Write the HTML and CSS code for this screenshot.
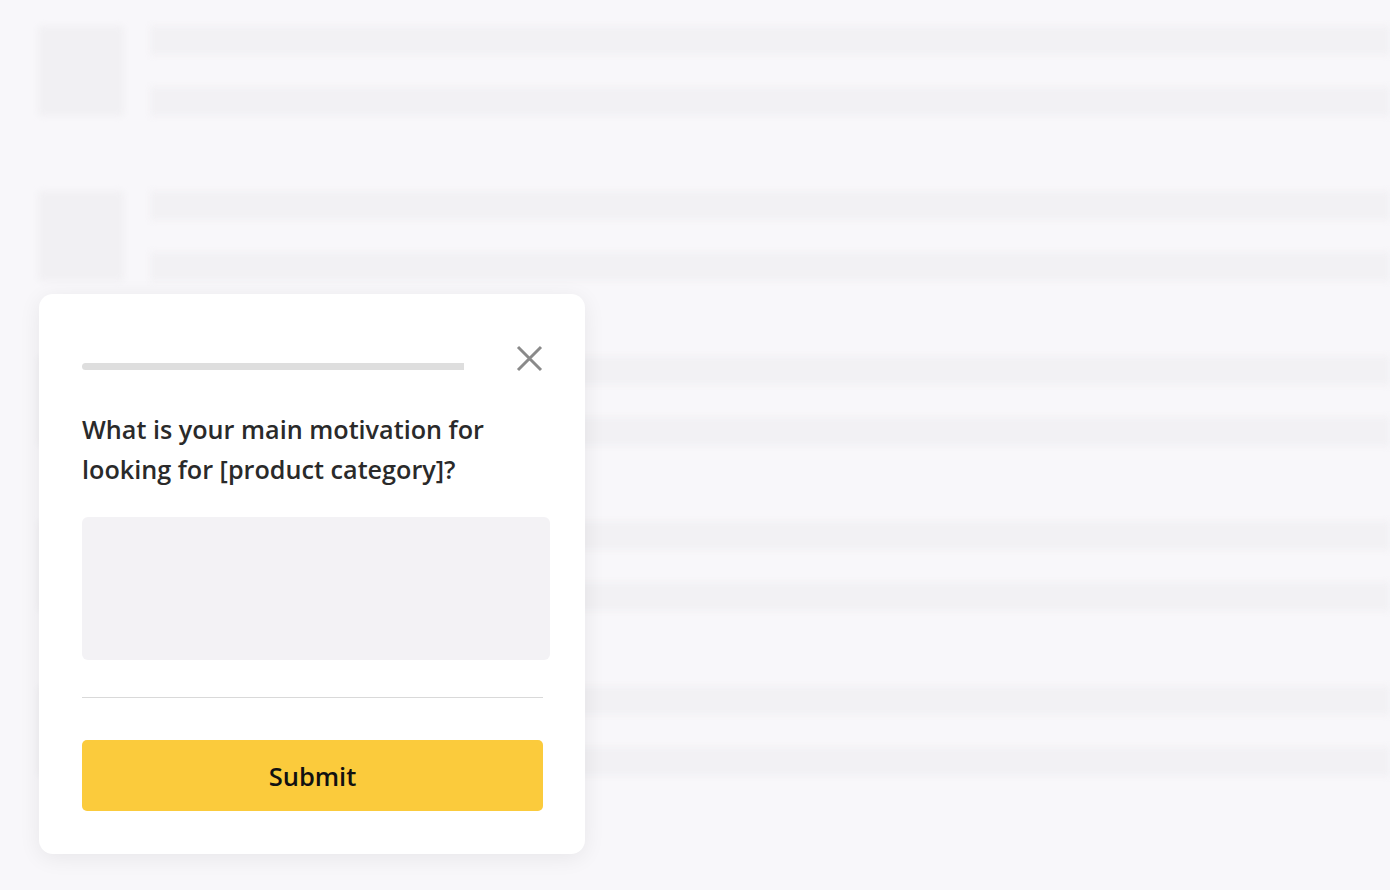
FILE: index.html
```html
<!DOCTYPE html>
<html lang="en">

<head>
    <meta charset="UTF-8">
    <meta name="viewport" content="width=device-width, initial-scale=1.0">
    <title>Survey</title>
    <link rel="stylesheet" href="styles.css">
</head>

<body>
    <div class="skeleton">
        <div class="sk-row"><div class="sk-thumb"></div><div class="sk-lines"><div class="sk-bar"></div><div class="sk-bar"></div></div></div>
        <div class="sk-row"><div class="sk-thumb"></div><div class="sk-lines"><div class="sk-bar"></div><div class="sk-bar"></div></div></div>
        <div class="sk-row"><div class="sk-thumb"></div><div class="sk-lines"><div class="sk-bar"></div><div class="sk-bar"></div></div></div>
        <div class="sk-row"><div class="sk-thumb"></div><div class="sk-lines"><div class="sk-bar"></div><div class="sk-bar"></div></div></div>
        <div class="sk-row"><div class="sk-thumb"></div><div class="sk-lines"><div class="sk-bar"></div><div class="sk-bar"></div></div></div>
    </div>

    <div class="survey">
        <div class="survey-head">
            <div class="progress"></div>
            <button class="close" aria-label="Close">
                <svg width="27" height="27" viewBox="0 0 27 27">
                    <path d="M2 2 L25 25 M25 2 L2 25" stroke="#8a8a8a" stroke-width="3" fill="none" />
                </svg>
            </button>
        </div>
        <h2 class="question">What is your main motivation for looking for [product category]?</h2>
        <textarea class="answer"></textarea>
        <hr class="divider">
        <button class="submit">Submit</button>
    </div>
</body>

</html>
```

FILE: styles.css
```css
body {
    margin: 0;
    padding: 0;
    background-color: #f8f7fa;
    font-family: "Open Sans", Arial, sans-serif;
    overflow: hidden;
}

.skeleton {
    padding-top: 26px;
    filter: blur(3px);
}

.sk-row {
    display: flex;
    gap: 26px;
    padding-left: 38px;
    margin-bottom: 75px;
}

.sk-thumb {
    width: 86px;
    height: 90px;
    background-color: #f1f0f3;
    border-radius: 4px;
}

.sk-lines {
    flex: 1;
    display: flex;
    flex-direction: column;
    gap: 32px;
}

.sk-bar {
    height: 29px;
    background-color: #f2f1f4;
}

.survey {
    position: absolute;
    left: 39px;
    top: 294px;
    width: 461px;
    padding: 51px 42px 43px 43px;
    background-color: #fff;
    border-radius: 14px;
    box-shadow: 0 4px 22px rgba(0, 0, 0, 0.07);
}

.survey-head {
    display: flex;
    justify-content: space-between;
    align-items: flex-start;
}

.progress {
    width: 382px;
    height: 7px;
    margin-top: 18px;
    background-color: #dedede;
    border-radius: 4px 0 0 4px;
}

.close {
    width: 27px;
    height: 27px;
    padding: 0;
    border: none;
    background: none;
    cursor: pointer;
}

.close svg {
    display: block;
}

.question {
    margin: 37px 0 28px;
    font-size: 25.2px;
    font-weight: 600;
    line-height: 40px;
    color: #2a2a2a;
}

.answer {
    display: block;
    box-sizing: border-box;
    width: 468px;
    height: 143px;
    margin: 0;
    padding: 12px;
    border: none;
    border-radius: 6px;
    background-color: #f3f2f5;
    resize: none;
    font-family: inherit;
}

.divider {
    margin: 37px 0 42px;
    border: none;
    border-top: 1px solid #d9d9d9;
}

.submit {
    display: block;
    width: 100%;
    height: 71px;
    border: none;
    border-radius: 5px;
    background-color: #fbcb3c;
    color: #111;
    font-family: inherit;
    font-size: 25.5px;
    font-weight: 600;
    cursor: pointer;
}
```
